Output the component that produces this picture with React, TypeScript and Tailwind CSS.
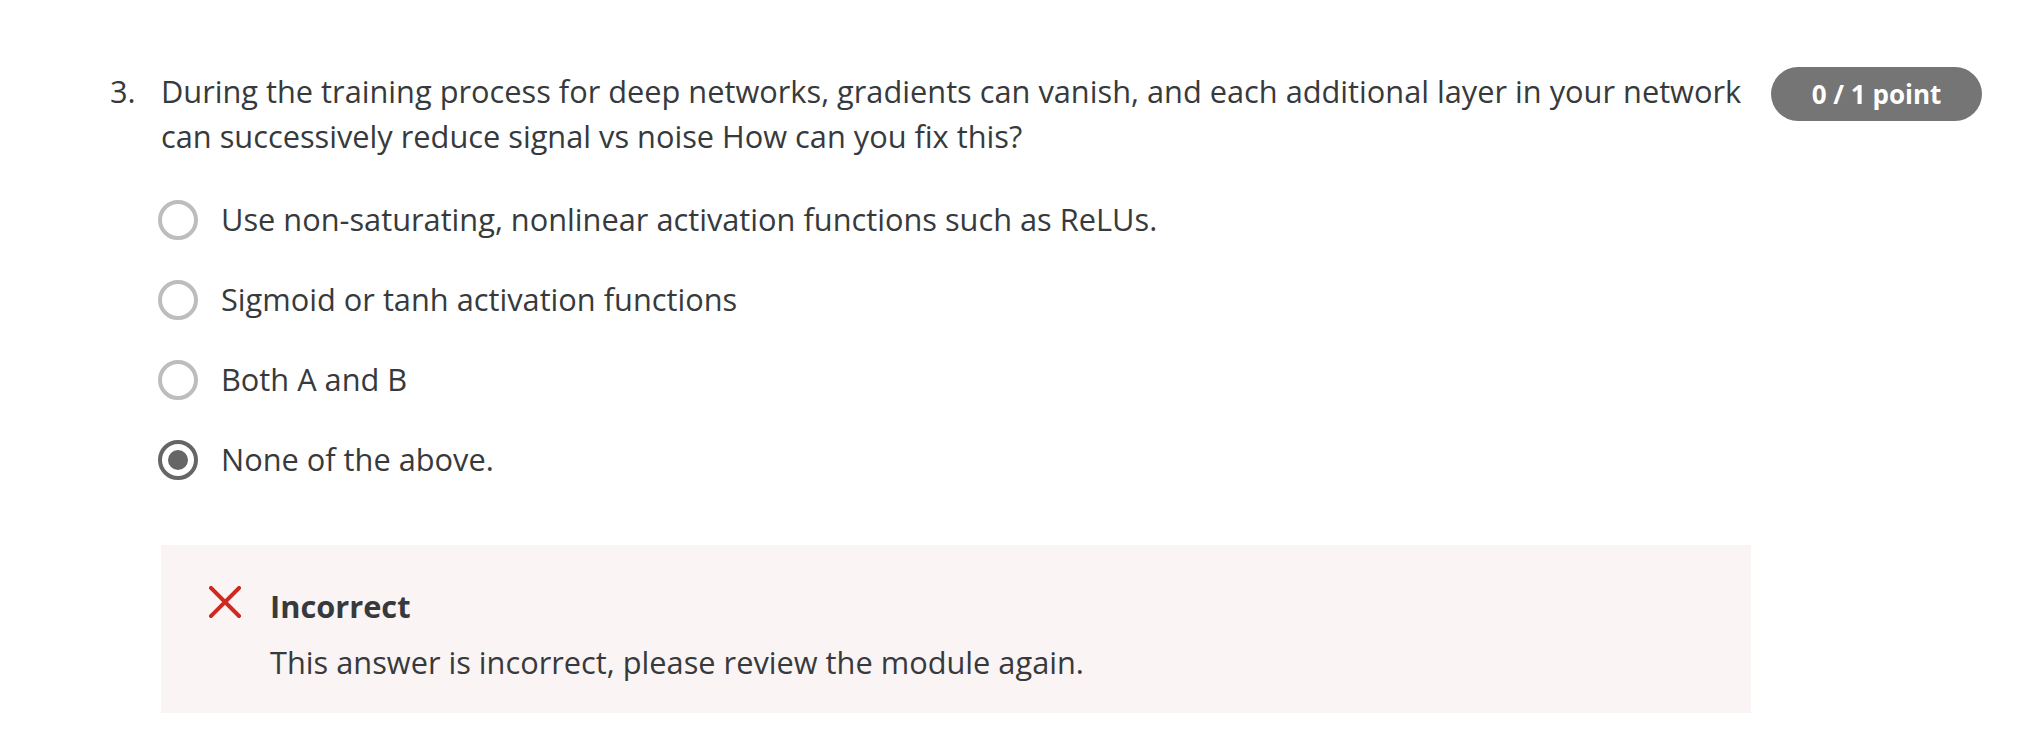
import React from 'react'

const options = [
  'Use non-saturating, nonlinear activation functions such as ReLUs.',
  'Sigmoid or tanh activation functions',
  'Both A and B',
  'None of the above.',
]

const selected = 3

function Radio({ checked }: { checked: boolean }) {
  if (checked) {
    return (
      <span className="flex h-[40px] w-[40px] shrink-0 items-center justify-center rounded-full border-[4px] border-[#666666]">
        <span className="h-[20px] w-[20px] rounded-full bg-[#666666]" />
      </span>
    )
  }
  return <span className="h-[40px] w-[40px] shrink-0 rounded-full border-[4px] border-[#bdbdbd]" />
}

function CrossIcon() {
  return (
    <svg width="32" height="32" viewBox="0 0 32 32" className="shrink-0">
      <path d="M2 2 L30 30 M30 2 L2 30" stroke="#cf2a22" strokeWidth="4" strokeLinecap="square" />
    </svg>
  )
}

export default function App() {
  return (
    <div
      className="min-h-screen bg-white text-[#373a3c]"
      style={{ fontFamily: '"Open Sans", "Noto Sans", sans-serif' }}
    >
      <div className="flex pt-[69px] pl-[110px]">
        <div className="w-[51px] shrink-0 text-[30.75px] leading-[45px]">3.</div>

        <div className="w-[1590px] shrink-0">
          <p className="text-[30.75px] leading-[45px]">
            During the training process for deep networks, gradients can vanish, and each additional layer in your
            network can successively reduce signal vs noise How can you fix this?
          </p>

          <div className="mt-[38px] flex flex-col gap-[35px] -ml-[3px]">
            {options.map((opt, i) => (
              <label key={opt} className="flex h-[45px] items-center gap-[23px]">
                <Radio checked={i === selected} />
                <span className="text-[30.75px] leading-[45px]">{opt}</span>
              </label>
            ))}
          </div>

          <div className="mt-[63px] bg-[#faf4f4] pt-[39px] pb-[28px] pl-[48px]">
            <div className="flex gap-[29px]">
              <div className="pt-[2px]">
                <CrossIcon />
              </div>
              <div>
                <div className="text-[30.75px] font-bold leading-[45px]">Incorrect</div>
                <div className="mt-[11px] text-[30.75px] leading-[45px]">
                  This answer is incorrect, please review the module again.
                </div>
              </div>
            </div>
          </div>
        </div>

        <div className="ml-[20px] shrink-0">
          <div className="-mt-[2px] flex h-[54px] w-[211px] items-center justify-center rounded-full bg-[#757575] text-[26px] font-bold text-white">
            0 / 1 point
          </div>
        </div>
      </div>
    </div>
  )
}
